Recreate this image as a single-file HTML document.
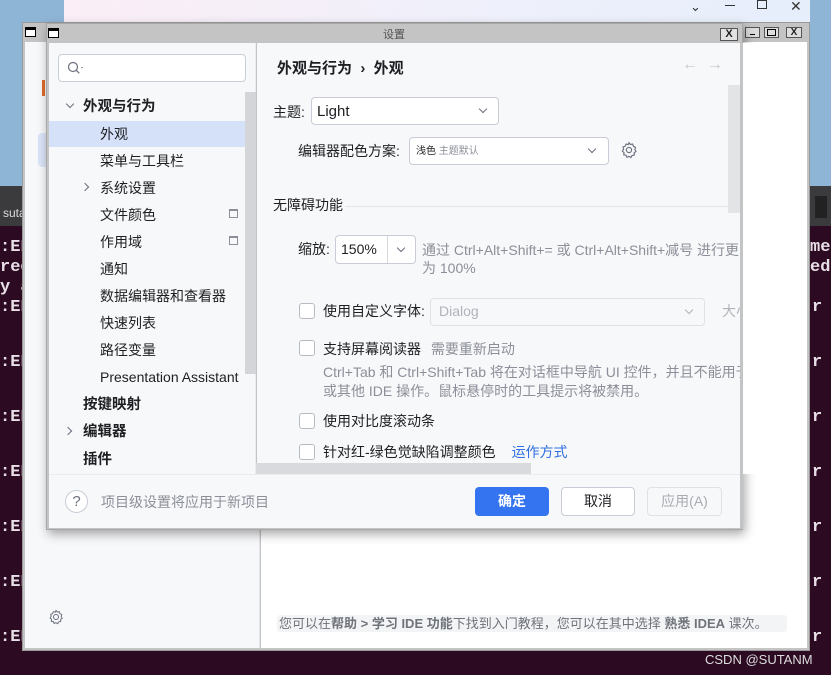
<!DOCTYPE html>
<html><head><meta charset="utf-8"><style>
*{margin:0;padding:0;box-sizing:border-box}
body{width:831px;height:675px;overflow:hidden;position:relative;background:#2c0a22;font-family:"Liberation Sans","Noto Sans CJK SC",sans-serif;color:#1e1f22}
.a{position:absolute}
.t{position:absolute;white-space:nowrap;font-size:14px;line-height:18px}
.term{position:absolute;white-space:nowrap;color:#e8e0e6;font-family:"Liberation Mono",monospace;font-size:17px;font-weight:bold}
.cb{position:absolute;width:16px;height:16px;border:1px solid #b8bbc2;border-radius:3px;background:#fff}
.combo{position:absolute;background:#fff;border:1px solid #c9ccd6;border-radius:4px}
.chev{position:absolute;width:6px;height:6px;border-right:1px solid #6c707e;border-bottom:1px solid #6c707e;transform:rotate(45deg)}
.chr{position:absolute;width:6px;height:6px;border-right:1px solid #6c707e;border-bottom:1px solid #6c707e;transform:rotate(-45deg)}
.g{color:#8c8f99}
</style></head><body>
<!-- desktop -->
<div class="a" style="left:0;top:0;width:831px;height:186px;background:#8fb5d6"></div>
<div class="a" style="left:0;top:186px;width:831px;height:40px;background:#3b3a3d"></div>
<div class="t" style="left:3px;top:204px;color:#ddd;font-size:12px">suta</div>
<div class="a" style="left:815px;top:196px;width:12px;height:22px;background:#222"></div>
<div class="term" style="left:0;top:238px">:EF</div>
<div class="term" style="left:0;top:258px">ree</div>
<div class="term" style="left:0;top:278px">y a</div>
<div class="term" style="left:0;top:298px">:EF</div>
<div class="term" style="left:0;top:353px">:EF</div>
<div class="term" style="left:0;top:408px">:EF</div>
<div class="term" style="left:0;top:463px">:EF</div>
<div class="term" style="left:0;top:518px">:EF</div>
<div class="term" style="left:0;top:573px">:EF</div>
<div class="term" style="left:0;top:628px">:EF</div>
<div class="term" style="left:810px;top:238px">me:</div>
<div class="term" style="left:810px;top:258px">edo</div>
<div class="term" style="left:812px;top:298px">r c</div>
<div class="term" style="left:812px;top:353px">r c</div>
<div class="term" style="left:812px;top:408px">r c</div>
<div class="term" style="left:812px;top:463px">r c</div>
<div class="term" style="left:812px;top:518px">r c</div>
<div class="term" style="left:812px;top:573px">r c</div>
<div class="term" style="left:812px;top:628px">r c</div>
<div class="t" style="left:705px;top:651px;color:#ddd;font-size:13px">CSDN @SUTANM</div>
<!-- top window -->
<div class="a" style="left:64px;top:0;width:746px;height:24px;background:linear-gradient(90deg,#fbeef6,#eef0fb 60%,#e6eefb)"></div>
<div class="t" style="left:690px;top:-2px;font-size:13px;color:#333">⌄</div>
<div class="a" style="left:725px;top:5px;width:10px;height:1px;background:#333"></div>
<div class="a" style="left:757px;top:0;width:10px;height:9px;border:1px solid #333"></div>
<div class="t" style="left:790px;top:-3px;font-size:14px;color:#333">✕</div>
<!-- back window -->
<div class="a" style="left:22px;top:22px;width:788px;height:629px;background:#c4c4c4;border:1px solid #9a9a9a"></div>
<div class="a" style="left:25px;top:27px;width:11px;height:10px;border:1px solid #000;border-top-width:3px;background:#fff"></div>
<div class="a" style="left:745px;top:27px;width:15px;height:11px;border:1px solid #555;background:#ddd"></div>
<div class="a" style="left:750px;top:34px;width:5px;height:1px;background:#000"></div>
<div class="a" style="left:764px;top:27px;width:15px;height:11px;border:1px solid #555;background:#ddd"></div>
<div class="a" style="left:767px;top:29px;width:9px;height:7px;border:1px solid #000"></div>
<div class="a" style="left:786px;top:27px;width:16px;height:11px;border:1px solid #555;background:#ddd;font-size:10px;line-height:9px;text-align:center;font-weight:bold">X</div>
<div class="a" style="left:25px;top:42px;width:235px;height:606px;background:#f7f8fa;border-right:1px solid #e4e5e8"></div>
<div class="a" style="left:261px;top:42px;width:546px;height:606px;background:#fff"></div>
<div class="a" style="left:42px;top:80px;width:3px;height:16px;background:#e06b2a"></div>
<div class="a" style="left:38px;top:133px;width:12px;height:34px;background:#dbe5f8;border-radius:4px"></div>
<svg class="a" style="left:48px;top:609px" width="16" height="16" viewBox="0 0 16 16"><circle cx="8" cy="8" r="2.5" fill="none" stroke="#6c707e"/><path d="M8 1.5l1.3 1.6 2-.4.6 2 1.9.9-.6 1.9 1 1.8-1.6 1.2.1 2-2 .4-1 1.8-1.7-1-1.9.8-.8-1.9-2-.3.3-2-1.5-1.3 1.1-1.7-.5-2 1.9-.7.8-1.9 2 .5z" fill="none" stroke="#6c707e" stroke-width="1"/></svg>
<div class="a" style="left:277px;top:615px;width:510px;height:17px;background:#f3f4f6;border-radius:3px"></div>
<div class="t" style="left:279px;top:615px;font-size:13px;color:#6f737a">您可以在<b>帮助 &gt; 学习 IDE 功能</b>下找到入门教程，您可以在其中选择 <b>熟悉 IDEA</b> 课次。</div>
<!-- dialog -->
<div class="a" style="left:46px;top:23px;width:697px;height:507px;background:#c4c4c4;border:1px solid #a8a8a8;box-shadow:2px 4px 10px rgba(0,0,0,.35)"></div>
<div class="a" style="left:48px;top:28px;width:11px;height:10px;border:1px solid #000;border-top-width:3px;background:#fff"></div>
<div class="t" style="left:383px;top:26px;font-size:11px;color:#555">设置</div>
<div class="a" style="left:720px;top:28px;width:18px;height:13px;border:1px solid #555;background:#e2e2e2;font-size:11px;line-height:11px;text-align:center;font-weight:bold">X</div>
<div class="a" style="left:49px;top:43px;width:207px;height:432px;background:#f7f8fa;border-right:1px solid #ebecf0"></div>
<div class="a" style="left:257px;top:43px;width:483px;height:432px;background:#f7f8fa"></div>
<div class="a" style="left:49px;top:474px;width:691px;height:54px;background:#f7f8fa;border-top:1px solid #ebecf0"></div>
<!-- search -->
<div class="a" style="left:58px;top:54px;width:188px;height:28px;background:#fff;border:1px solid #c9ccd6;border-radius:4px"></div>
<svg class="a" style="left:67px;top:61px" width="18" height="14"><circle cx="6" cy="6" r="4.5" fill="none" stroke="#6c707e" stroke-width="1.2"/><path d="M9.3 9.3l3 3" stroke="#6c707e" stroke-width="1.2"/><path d="M14 6l2 0 -1 1.5z" fill="#6c707e"/></svg>
<!-- left tree -->
<div class="a" style="left:49px;top:121px;width:196px;height:26px;background:#d5e1f9"></div>
<div class="a" style="left:245px;top:92px;width:11px;height:282px;background:#d4d5d8"></div>
<div class="chev" style="left:67px;top:101px"></div>
<div class="t" style="left:83px;top:98px;font-weight:bold;font-size:14.5px">外观与行为</div>
<div class="t" style="left:100px;top:125px">外观</div>
<div class="t" style="left:100px;top:152px">菜单与工具栏</div>
<div class="chr" style="left:82px;top:184px"></div>
<div class="t" style="left:100px;top:179px">系统设置</div>
<div class="t" style="left:100px;top:206px">文件颜色</div>
<div class="a" style="left:229px;top:209px;width:9px;height:9px;border:1px solid #8c8f99;border-top-width:2px"></div>
<div class="t" style="left:100px;top:233px">作用域</div>
<div class="a" style="left:229px;top:236px;width:9px;height:9px;border:1px solid #8c8f99;border-top-width:2px"></div>
<div class="t" style="left:100px;top:260px">通知</div>
<div class="t" style="left:100px;top:287px">数据编辑器和查看器</div>
<div class="t" style="left:100px;top:314px">快速列表</div>
<div class="t" style="left:100px;top:341px">路径变量</div>
<div class="t" style="left:100px;top:368px;width:140px;overflow:hidden">Presentation Assistant</div>
<div class="t" style="left:83px;top:396px;font-weight:bold;font-size:14.5px">按键映射</div>
<div class="chr" style="left:65px;top:428px"></div>
<div class="t" style="left:83px;top:423px;font-weight:bold;font-size:14.5px">编辑器</div>
<div class="t" style="left:83px;top:451px;font-weight:bold;font-size:14.5px">插件</div>
<!-- right -->
<div class="t" style="left:277px;top:60px;font-size:15px;font-weight:bold">外观与行为 &nbsp;›&nbsp; 外观</div>
<div class="t" style="left:682px;top:56px;font-size:16px;color:#c3c6cc">← &nbsp;→</div>
<div class="a" style="left:728px;top:85px;width:12px;height:128px;background:#e3e4e6"></div>
<div class="t" style="left:273px;top:103px">主题:</div>
<div class="combo" style="left:311px;top:97px;width:188px;height:28px"></div>
<div class="t" style="left:317px;top:103px;font-size:15px">Light</div>
<div class="chev" style="left:480px;top:106px"></div>
<div class="t" style="left:298px;top:142px">编辑器配色方案:</div>
<div class="combo" style="left:409px;top:137px;width:200px;height:28px"></div>
<div class="t" style="left:416px;top:143px;font-size:10px">浅色 <span class="g">主题默认</span></div>
<div class="chev" style="left:589px;top:146px"></div>
<svg class="a" style="left:620px;top:141px" width="18" height="18" viewBox="0 0 16 16"><circle cx="8" cy="8" r="2.3" fill="none" stroke="#6c707e"/><path d="M8 1.5l1.3 1.6 2-.4.6 2 1.9.9-.6 1.9 1 1.8-1.6 1.2.1 2-2 .4-1 1.8-1.7-1-1.9.8-.8-1.9-2-.3.3-2-1.5-1.3 1.1-1.7-.5-2 1.9-.7.8-1.9 2 .5z" fill="none" stroke="#6c707e"/></svg>
<div class="t" style="left:273px;top:196px">无障碍功能</div>
<div class="a" style="left:345px;top:206px;width:395px;height:1px;background:#e4e5e8"></div>
<div class="t" style="left:298px;top:240px">缩放:</div>
<div class="combo" style="left:335px;top:235px;width:81px;height:29px"></div>
<div class="a" style="left:387px;top:236px;width:1px;height:27px;background:#d6d8de"></div>
<div class="t" style="left:341px;top:240px">150%</div>
<div class="chev" style="left:398px;top:245px"></div>
<div class="t g" style="left:422px;top:241px;font-size:14px">通过 Ctrl+Alt+Shift+= 或 Ctrl+Alt+Shift+减号 进行更改</div>
<div class="t g" style="left:422px;top:259px;font-size:14px">为 100%</div>
<div class="cb" style="left:299px;top:303px"></div>
<div class="t" style="left:323px;top:302px">使用自定义字体:</div>
<div class="combo" style="left:430px;top:298px;width:275px;height:28px;background:#f7f8fa;border-color:#e0e2e6"></div>
<div class="t" style="left:439px;top:302px;color:#b0b3ba">Dialog</div>
<div class="chev" style="left:686px;top:307px;border-color:#b0b3ba"></div>
<div class="t" style="left:722px;top:302px;color:#b0b3ba">大小</div>
<div class="cb" style="left:299px;top:340px"></div>
<div class="t" style="left:323px;top:340px">支持屏幕阅读器 <span class="g" style="margin-left:6px;font-size:14px">需要重新启动</span></div>
<div class="t g" style="left:323px;top:363px;font-size:14px">Ctrl+Tab 和 Ctrl+Shift+Tab 将在对话框中导航 UI 控件，并且不能用于</div>
<div class="t g" style="left:323px;top:382px;font-size:14px">或其他 IDE 操作。鼠标悬停时的工具提示将被禁用。</div>
<div class="cb" style="left:299px;top:413px"></div>
<div class="t" style="left:323px;top:412px">使用对比度滚动条</div>
<div class="cb" style="left:299px;top:444px"></div>
<div class="t" style="left:323px;top:443px">针对红-绿色觉缺陷调整颜色 <span style="color:#2f6fe0;margin-left:12px">运作方式</span></div>
<div class="a" style="left:256px;top:463px;width:275px;height:11px;background:#d9dadd"></div>
<div class="a" style="left:740px;top:43px;width:3px;height:486px;background:#c4c4c4"></div>
<div class="a" style="left:743px;top:43px;width:64px;height:431px;background:#fff"></div>
<!-- bottom -->
<div class="a" style="left:65px;top:490px;width:23px;height:23px;border:1px solid #c9ccd6;border-radius:50%;background:#fff;text-align:center;font-size:15px;line-height:21px;color:#6c707e">?</div>
<div class="t g" style="left:101px;top:493px">项目级设置将应用于新项目</div>
<div class="a" style="left:475px;top:487px;width:74px;height:29px;background:#3574f0;border-radius:4px;color:#fff;text-align:center;font-size:14px;line-height:29px;font-weight:bold">确定</div>
<div class="a" style="left:561px;top:487px;width:74px;height:29px;background:#fff;border:1px solid #c9ccd6;border-radius:4px;text-align:center;font-size:14px;line-height:27px">取消</div>
<div class="a" style="left:647px;top:487px;width:75px;height:29px;background:#f7f8fa;border:1px solid #dfe1e5;border-radius:4px;text-align:center;font-size:14px;line-height:27px;color:#a8abb2">应用(A)</div>
</body></html>
